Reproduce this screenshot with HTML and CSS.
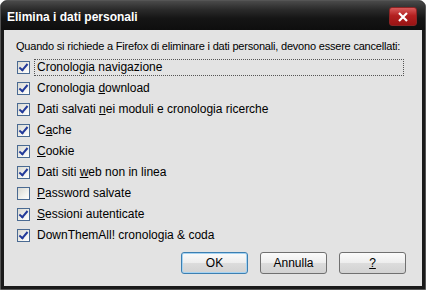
FILE: index.html
```html
<!DOCTYPE html>
<html lang="it">
<head>
<meta charset="utf-8">
<title>Elimina i dati personali</title>
<link rel="stylesheet" href="styles.css">
</head>
<body>
<div class="window">
  <div class="titlebar">
    <span class="title">Elimina i dati personali</span>
    <span class="close">
      <svg width="12" height="10" viewBox="0 0 12 10"><path d="M2 1 L10 9 M10 1 L2 9" stroke="#fff" stroke-width="2.2"/></svg>
    </span>
  </div>
  <div class="client">
    <p class="intro">Quando si richiede a Firefox di eliminare i dati personali, devono essere cancellati:</p>
    <ul class="list">
      <li class="row"><span class="cb on"></span><span class="label focus">Cronologia navigazione</span></li>
      <li class="row"><span class="cb on"></span><span class="label">Cronologia <u>d</u>ownload</span></li>
      <li class="row"><span class="cb on"></span><span class="label">Dati salvati <u>n</u>ei moduli e cronologia ricerche</span></li>
      <li class="row"><span class="cb on"></span><span class="label">C<u>a</u>che</span></li>
      <li class="row"><span class="cb on"></span><span class="label"><u>C</u>ookie</span></li>
      <li class="row"><span class="cb on"></span><span class="label">Dati siti <u>w</u>eb non in linea</span></li>
      <li class="row"><span class="cb"></span><span class="label"><u>P</u>assword salvate</span></li>
      <li class="row"><span class="cb on"></span><span class="label"><u>S</u>essioni autenticate</span></li>
      <li class="row"><span class="cb on"></span><span class="label">DownThemAll! cronologia &amp; coda</span></li>
    </ul>
    <div class="buttons">
      <button class="btn default">OK</button>
      <button class="btn">Annulla</button>
      <button class="btn"><u>?</u></button>
    </div>
  </div>
</div>
</body>
</html>
```
FILE: styles.css
```css
html, body {
  margin: 0;
  padding: 0;
  background: #ffffff;
}
.window {
  width: 426px;
  height: 290px;
  box-sizing: border-box;
  background: #1a1a1a;
  border: 1px solid #555;
  border-radius: 7px 7px 0 0;
  display: flex;
  flex-direction: column;
  font-family: "Liberation Sans", sans-serif;
}
.titlebar {
  height: 29px;
  flex: none;
  display: flex;
  align-items: center;
  justify-content: space-between;
  padding: 0 8px 0 6px;
  background: linear-gradient(#4a4a4a 0%, #2a2a2a 30%, #151515 60%, #0e0e0e 100%);
  border-radius: 6px 6px 0 0;
}
.title {
  color: #fff;
  font-weight: bold;
  font-size: 12px;
  padding-top: 2px;
}
.close {
  width: 28px;
  height: 19px;
  box-sizing: border-box;
  border: 1px solid #8a2424;
  border-radius: 3px;
  background: linear-gradient(#d85a5a 0%, #b32020 45%, #9a1414 100%);
  display: flex;
  align-items: center;
  justify-content: center;
  margin-top: 2px;
}
.client {
  flex: 1;
  margin: 0 3px 3px;
  background: #e3e3e3;
  padding: 9px 0 0 12px;
  font-family: "Liberation Sans", sans-serif;
  font-size: 12px;
  color: #000;
  display: flex;
  flex-direction: column;
}
.intro {
  margin: 0;
  height: 15px;
  line-height: 15px;
  font-size: 11px;
  white-space: nowrap;
  letter-spacing: -0.2px;
}
.list {
  list-style: none;
  margin: 3px 0 0 0;
  padding: 0 0 0 1px;
}
.row {
  height: 21px;
  display: flex;
  align-items: center;
}
.cb {
  width: 13px;
  height: 13px;
  box-sizing: border-box;
  border: 1px solid #4a6a92;
  background: linear-gradient(135deg, #d8d8d2 0%, #f2f2ee 60%, #ffffff 100%);
  margin-right: 4px;
  position: relative;
}
.cb.on::after {
  content: "";
  position: absolute;
  left: 3px;
  top: 0px;
  width: 3px;
  height: 7px;
  border: solid #233a9a;
  border-width: 0 2px 2px 0;
  transform: rotate(40deg);
}
.label {
  line-height: 15px;
  padding: 0 2px;
  border: 1px solid transparent;
}
.label.focus {
  border: 1px dotted #555;
  width: 364px;
}
.buttons {
  display: flex;
  justify-content: flex-end;
  gap: 12px;
  margin-top: 6px;
  padding-right: 16px;
}
.btn {
  width: 67px;
  height: 22px;
  box-sizing: border-box;
  font-family: "Liberation Sans", sans-serif;
  font-size: 12px;
  color: #000;
  border: 1px solid #707070;
  border-radius: 3px;
  background: linear-gradient(#fbfbfb 0%, #ededed 50%, #dcdcdc 51%, #d2d2d2 100%);
  padding: 0;
}
.btn.default {
  border-color: #3c7fb1;
  box-shadow: inset 0 0 0 1px #a6d3f2;
}
```
